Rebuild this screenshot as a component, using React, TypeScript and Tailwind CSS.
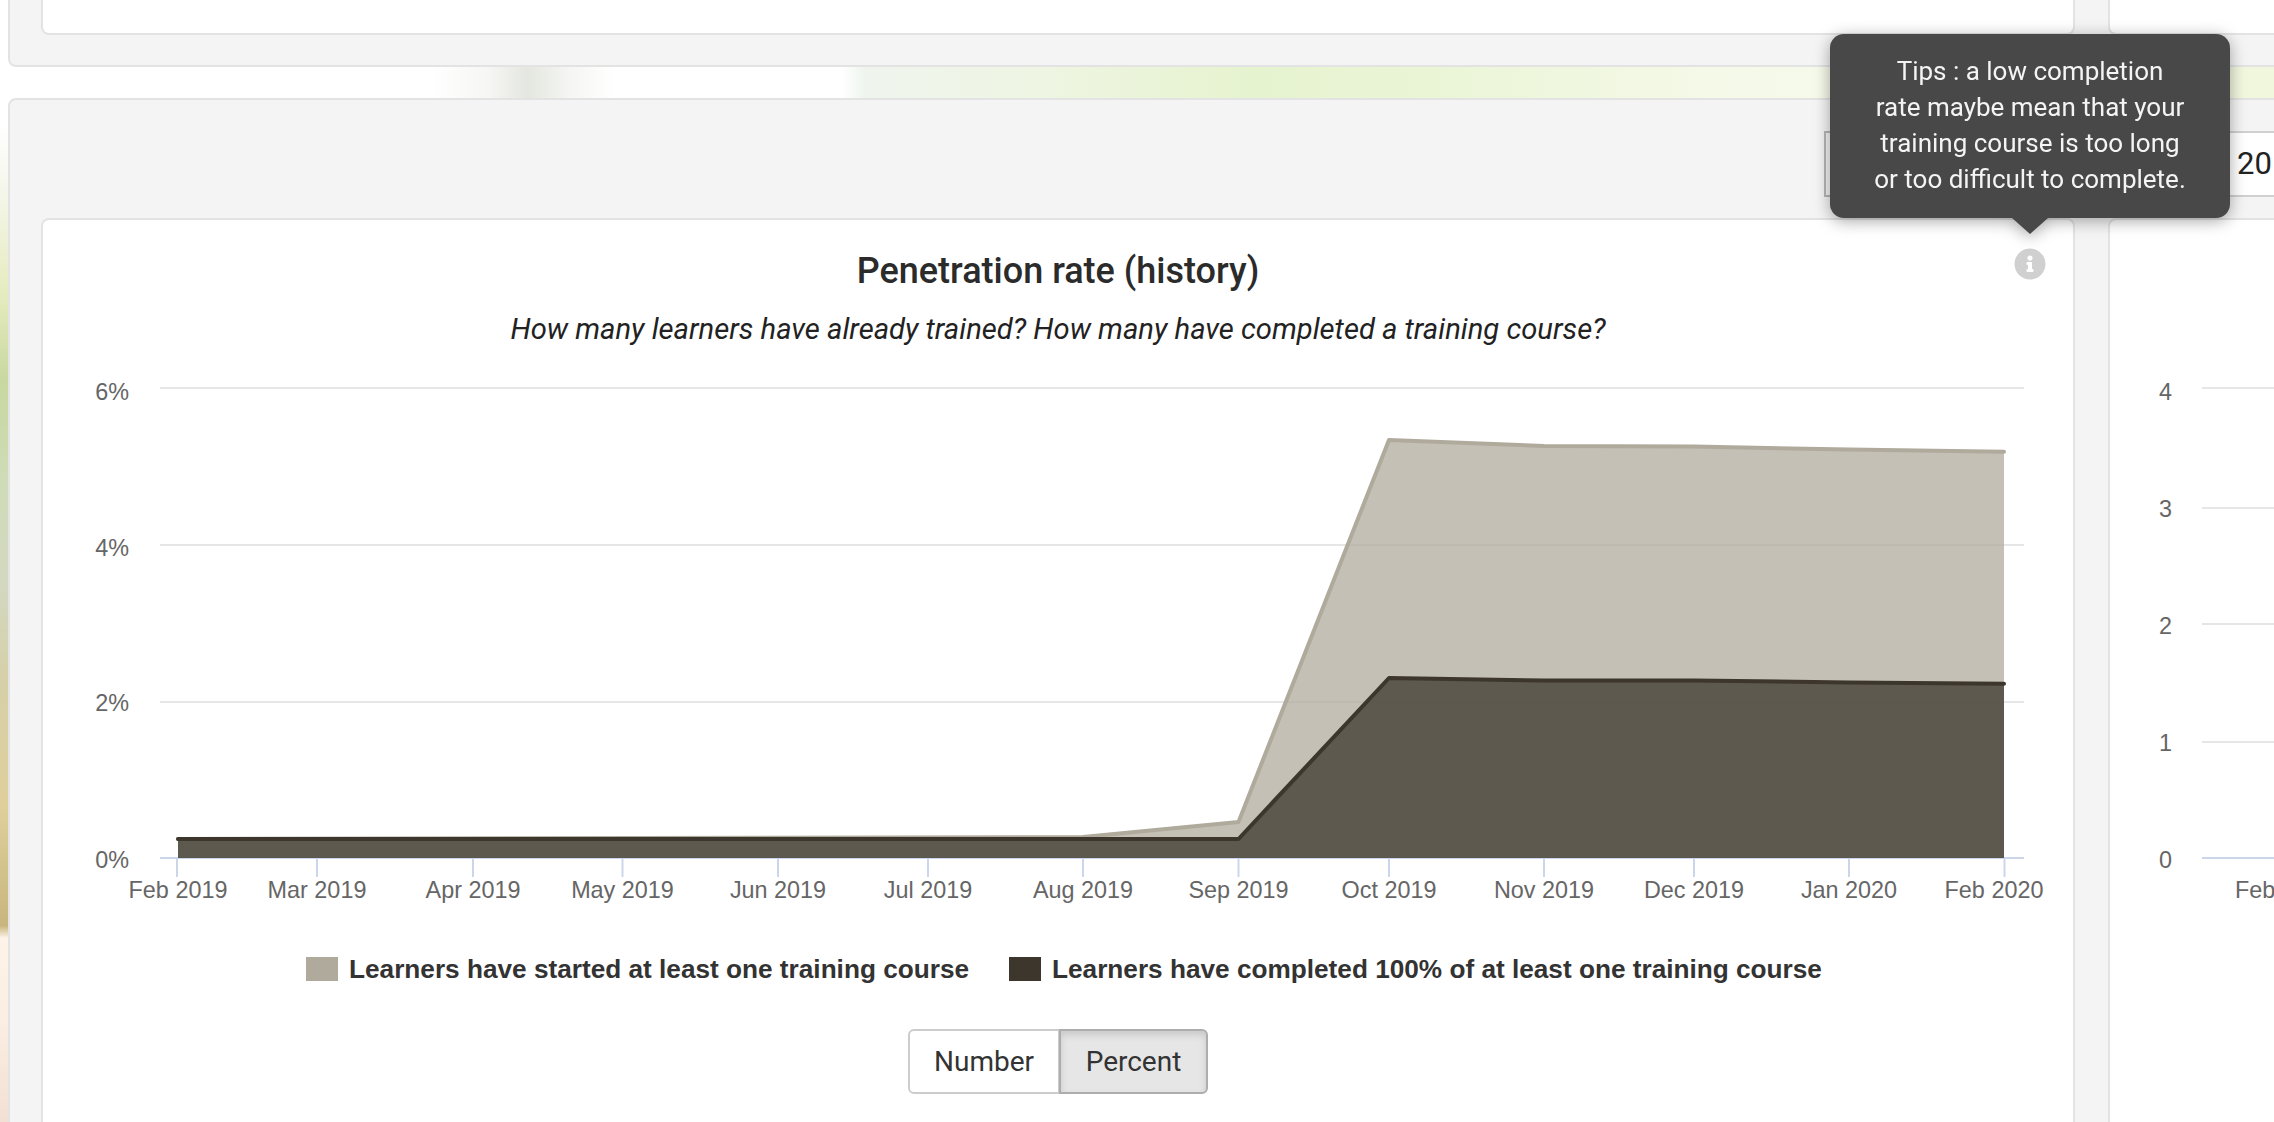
import { FaInfoCircle } from "react-icons/fa";

const ticks = [
  { x: 177, label: "Feb 2019", at: 178 },
  { x: 317, label: "Mar 2019" },
  { x: 473, label: "Apr 2019" },
  { x: 622.5, label: "May 2019" },
  { x: 778, label: "Jun 2019" },
  { x: 928, label: "Jul 2019" },
  { x: 1083, label: "Aug 2019" },
  { x: 1238.5, label: "Sep 2019" },
  { x: 1389, label: "Oct 2019" },
  { x: 1544, label: "Nov 2019" },
  { x: 1694, label: "Dec 2019" },
  { x: 1849, label: "Jan 2020" },
  { x: 2004.5, label: "Feb 2020", at: 1994 },
];

const started = "M178 838 L1083 836 L1238.5 821 L1389 439 L1544 445 L1694 445.5 L1849 448.5 L2004 450.7";
const completed = "M178 838 L1238.5 838 L1389 677 L1544 679.5 L1694 679.5 L1849 681.5 L2004 682.7";
const labelFont = "font-['Liberation_Sans',sans-serif] text-[23.4px] fill-[#666666]";

function MainChart() {
  return (
    <svg className="block mt-[24px]" width={2030} height={560} viewBox="43 370 2030 560">
      {[387, 544, 701].map((y) => (
        <line key={y} x1={160} x2={2024} y1={y} y2={y} stroke="#e6e6e6" strokeWidth={2} />
      ))}
      <line x1={160} x2={2024} y1={857} y2={857} stroke="#ccd6eb" strokeWidth={2} />
      {ticks.map((t) => (
        <line key={t.label} x1={t.x} x2={t.x} y1={858} y2={876} stroke="#ccd6eb" strokeWidth={2} />
      ))}

      <path d={`${started} L2004 857 L178 857 Z`} fill="#b0ab9c" fillOpacity={0.75} />
      <path d={started} fill="none" stroke="#b0aa9d" strokeWidth={4} strokeLinejoin="round" strokeLinecap="round" />
      <path d={`${completed} L2004 857 L178 857 Z`} fill="#3b372d" fillOpacity={0.75} />
      <path d={completed} fill="none" stroke="#3c362c" strokeWidth={4} strokeLinejoin="round" strokeLinecap="round" />

      {[
        { y: 399, label: "6%" },
        { y: 555, label: "4%" },
        { y: 710, label: "2%" },
        { y: 867, label: "0%" },
      ].map((l) => (
        <text key={l.label} x={129} y={l.y} textAnchor="end" className={labelFont}>
          {l.label}
        </text>
      ))}
      {ticks.map((t) => (
        <text key={t.label} x={t.at ?? t.x} y={897} textAnchor="middle" className={labelFont}>
          {t.label}
        </text>
      ))}
    </svg>
  );
}

function SideChart() {
  return (
    <svg className="block mt-[151px]" width={164} height={560} viewBox="2110 370 164 560">
      {[387, 507, 623, 741].map((y) => (
        <line key={y} x1={2202} x2={2274} y1={y} y2={y} stroke="#e6e6e6" strokeWidth={2} />
      ))}
      <line x1={2202} x2={2274} y1={857} y2={857} stroke="#ccd6eb" strokeWidth={2} />
      {[
        { y: 399, label: "4" },
        { y: 516, label: "3" },
        { y: 633, label: "2" },
        { y: 750, label: "1" },
        { y: 867, label: "0" },
      ].map((l) => (
        <text key={l.label} x={2172} y={l.y} textAnchor="end" className={labelFont}>
          {l.label}
        </text>
      ))}
      <text x={2235} y={897} className={labelFont}>
        Feb
      </text>
    </svg>
  );
}

function Tooltip() {
  return (
    <div className="absolute left-[-184px] bottom-[calc(100%+14px)] w-[400px] drop-shadow-[0_3px_8px_rgba(0,0,0,0.35)]">
      <div className="h-[184px] pt-[19px] rounded-[14px] bg-[#484848] text-center text-[26px] leading-[36px] text-[#f4f4f4] font-['Roboto',sans-serif]">
        Tips : a low completion
        <br />
        rate maybe mean that your
        <br />
        training course is too long
        <br />
        or too difficult to complete.
      </div>
      <div className="mx-auto w-0 h-0 border-x-[18px] border-x-transparent border-t-[16px] border-t-[#484848]" />
    </div>
  );
}

export default function App() {
  return (
    <div className="relative h-screen w-screen overflow-hidden bg-white font-['Roboto',sans-serif] text-[#333333]">
      {/* wallpaper that shows around the panels */}
      <div className="absolute left-0 top-0 w-[8px] h-full bg-[linear-gradient(180deg,#ffffff_0%,#ffffff_11%,#f5f6ea_17%,#e6ecc0_26%,#c8d8a0_34%,#cfdcb8_43%,#d3d8c0_52%,#d6d0a8_61%,#dfcf9b_72%,#c9b67e_82.5%,#fdf3e8_83.6%,#fbefe3_90%,#f3e0d4_100%)]" />
      <div className="absolute left-0 top-[67px] w-full h-[31px] bg-[linear-gradient(90deg,#ffffff_0%,#ffffff_19%,#f6f6f4_21.5%,#e4e6df_23.2%,#f5f6f3_25%,#ffffff_27%,#ffffff_37%,#eff5ee_38%,#eef5e2_46%,#e6f3cf_55%,#eaf5d6_63%,#f5f9e8_75%,#f8fbec_90%,#f0f7dc_100%)]" />

      {/* top panel, scrolled mostly out of view */}
      <div className="relative ml-[8px] w-[2600px] h-[67px] flex gap-[33px] pl-[31px] bg-[#f4f4f4] border-x-2 border-b-2 border-[#e3e3e3] rounded-b-[8px]">
        <div className="shrink-0 w-[2034px] h-[35px] bg-white border-x-2 border-b-2 border-[#e3e3e3] rounded-b-[8px]" />
        <div className="shrink-0 w-[400px] h-[35px] bg-white border-x-2 border-b-2 border-[#e3e3e3] rounded-b-[8px]" />
      </div>

      <div className="relative ml-[8px] mt-[31px] w-[2600px] h-[1100px] pt-[31px] bg-[#f4f4f4] border-2 border-[#e3e3e3] rounded-[8px]">
        <div className="flex h-[66px] ml-[1814px]">
          <div className="shrink-0 w-[396px] border-2 border-[#b5b5b5]" />
          <div className="shrink-0 w-[300px] pl-[17px] flex items-center bg-white border-y-2 border-[#d0d0d0] text-[31px] text-[#222222]">
            20
          </div>
        </div>

        <div className="flex gap-[33px] pl-[31px] mt-[21px]">
          <div className="relative shrink-0 w-[2034px] h-[1000px] bg-white border-2 border-[#e3e3e3] rounded-[8px]">
            <h2 className="mt-[31px] text-center text-[36px] leading-[40px] font-medium text-[#2b2b2b]">
              Penetration rate (history)
            </h2>
            <p className="mt-[20px] text-center text-[29.2px] leading-[36px] italic text-[#222222]">
              How many learners have already trained? How many have completed a training course?
            </p>

            <div className="absolute left-[1971px] top-[28px]">
              <FaInfoCircle className="w-[32px] h-[32px] text-[#d0d0d0]" />
              <Tooltip />
            </div>

            <MainChart />

            <div className="flex justify-center gap-[40px] pl-[12px] mt-[26px] font-['Liberation_Sans',sans-serif] text-[26.2px] leading-[24px] font-bold text-[#333333]">
              <div className="flex items-center gap-[11px]">
                <span className="w-[32px] h-[24px] bg-[#b0aa9d]" />
                Learners have started at least one training course
              </div>
              <div className="flex items-center gap-[11px]">
                <span className="w-[32px] h-[24px] bg-[#3c362c]" />
                Learners have completed 100% of at least one training course
              </div>
            </div>

            <div className="flex justify-center mt-[48px] text-[28px] text-[#333333]">
              <button className="w-[152px] h-[65px] bg-white border-2 border-[#cccccc] rounded-l-[6px]">Number</button>
              <button className="w-[149px] h-[65px] -ml-[1px] bg-[#e6e6e6] border-2 border-[#adadad] rounded-r-[6px] shadow-[inset_0_4px_7px_rgba(0,0,0,0.125)]">
                Percent
              </button>
            </div>
          </div>

          <div className="shrink-0 w-[400px] h-[1000px] bg-white border-2 border-[#e3e3e3] rounded-[8px]">
            <SideChart />
          </div>
        </div>
      </div>
    </div>
  );
}
